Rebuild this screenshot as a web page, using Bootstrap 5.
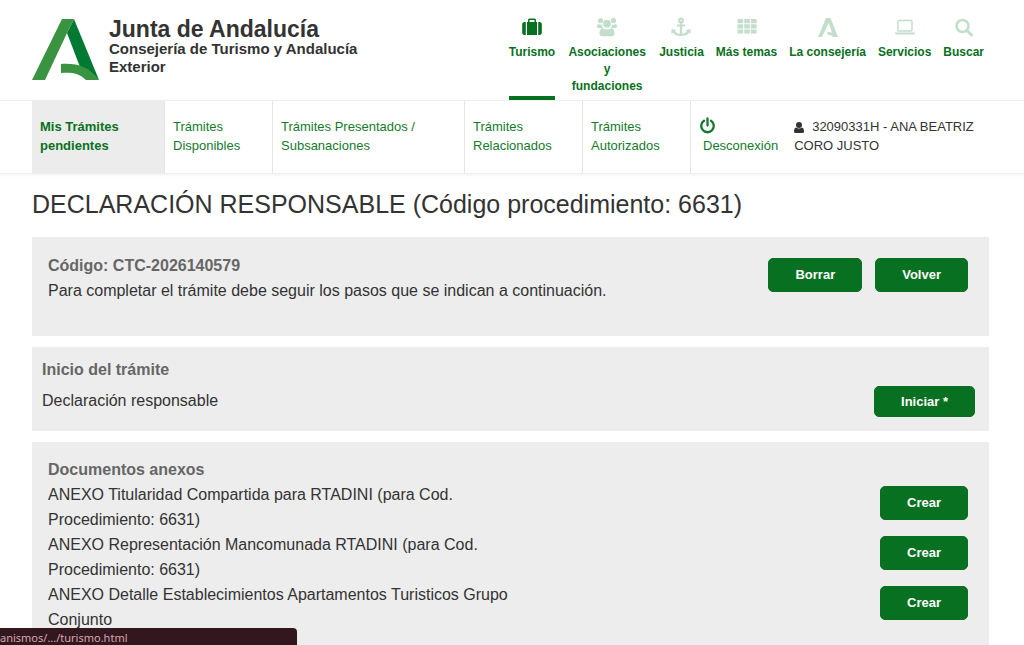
<!DOCTYPE html>
<html lang="es">
<head>
<meta charset="utf-8">
<meta name="viewport" content="width=device-width, initial-scale=1">
<title>Junta de Andalucía - Declaración responsable</title>
<link rel="stylesheet" href="https://cdn.jsdelivr.net/npm/bootstrap@5.3.0/dist/css/bootstrap.min.css">
<style>
:root { --ja-green: #087021; --ja-text: #333; }
html, body { height: 100%; }
body { font-family: "Liberation Sans", Arial, sans-serif; font-size: 16px; line-height: 25px; color: var(--ja-text); overflow: hidden; }
.page-x { padding-left: 32px; padding-right: 35px; }
.site-head { height: 100px; }
.brand { color: var(--ja-text); font-weight: bold; padding-top: 18px; }
.brand-logo { width: 68px; height: 63px; }
.brand-text { margin-left: 9px; }
.brand-name { font-size: 23px; line-height: 22px; }
.brand-dept { font-size: 15px; line-height: 18px; width: 280px; }
.main-nav { gap: 12px; padding-right: 5px; font-size: 12px; line-height: 17px; font-weight: bold; }
.main-nav a { color: var(--ja-green); text-decoration: none; padding-top: 17px; border-bottom: 4px solid transparent; height: 100px; }
.main-nav a.active { border-bottom-color: var(--ja-green); }
.main-nav svg { width: 22px; height: 20px; margin-bottom: 7px; color: #c3decb; }
.main-nav a.active svg { color: var(--ja-green); }
.groups-item { width: 80px; }
.tabs-bar { border-top: 1px solid #eee; border-bottom: 1px solid #eee; box-shadow: 0 1px 3px #0000000f; font-size: 13px; line-height: 19px; }
.tabs-bar .tab { color: #157a2c; text-decoration: none; padding: 16px 8px 18px; border-right: 1px solid #e6e6e6; flex-shrink: 0; }
.tabs-bar .tab.active { background: #ececec; font-weight: bold; color: var(--ja-green); }
.tab-s { width: 108px; } .tab-m { width: 118px; } .tab-l { width: 133px; } .tab-xl { width: 192px; }
.logout { color: #157a2c; text-decoration: none; padding: 16px 8px; }
.user-box { padding: 16px 8px; flex: 0 1 205px; }
h1 { font-size: 25px; line-height: 32px; margin: 14px 0 17px; font-weight: normal; }
.panel { background: #ededed; margin-bottom: 11px; padding: 16px 21px 16px 16px; }
.panel h2 { font-size: 16px; line-height: 25px; font-weight: bold; color: #666; margin: 0; }
.code-panel { padding-bottom: 33px; }
.code-actions { gap: 13px; padding-top: 5px; }
.start-panel { padding: 10px 14px 14px 10px; }
.start-panel h2 { margin-bottom: 6px; }
.start-text { padding-bottom: 4px; }
.btn-ja { --bs-btn-bg: #087021; --bs-btn-color: #fff; --bs-btn-border-color: #087021; --bs-btn-hover-bg: #065a1a; --bs-btn-hover-color: #fff; font-size: 13px; line-height: 20px; font-weight: bold; padding: 6px 26px; border-radius: 5px; }
.start-panel .btn-ja { padding-top: 5px; padding-bottom: 4px; }
.annexes { padding-top: 15px; }
.annex-text { width: 500px; }
.annexes .btn-ja { margin-top: 4px; }
.status-tip { left: 0; bottom: 0; width: 297px; padding-top: 3px; background: #32171f; border-radius: 0 4px 0 0; color: #d9a5b0; font-family: "Noto Sans", sans-serif; font-size: 11px; line-height: 14px; }
</style>
</head>
<body>
<header class="site-head page-x d-flex justify-content-between">
  <a href="#" class="brand d-flex text-decoration-none">
    <svg class="brand-logo flex-shrink-0" viewBox="0 0 68 63" aria-hidden="true">
      <path d="M42 1 67 62 48 49 35 15Z" fill="#007a33"/>
      <path d="M30 1H42L35 15 13 62H0Z" fill="#399341"/>
      <path d="M29 46C44 45 57 48 67 62H54C47 55 39 54 29 55Z" fill="#399341"/>
    </svg>
    <span class="brand-text">
      <span class="brand-name d-block">Junta de Andalucía</span>
      <span class="brand-dept d-block">Consejería de Turismo y Andalucía Exterior</span>
    </span>
  </a>
  <nav class="main-nav d-flex text-center">
    <a href="#" class="active d-flex flex-column align-items-center"><svg viewBox="0 0 22 20" fill="currentColor"><path d="M7 5V3q0-1.500 1.500-1.500h5q1.500 0 1.500 1.500v2h1v13H6V5h1Zm1.500 0h5V3h-5ZM4.800 5v13H3.500Q1.200 18 1.200 16V7q0-2 2.300-2Zm12.400 0v13h1.300q2.300 0 2.300-2V7q0-2-2.300-2Z"/></svg>Turismo</a>
    <a href="#" class="groups-item d-flex flex-column align-items-center"><svg viewBox="0 0 22 20" fill="currentColor"><circle cx="4.500" cy="3.500" r="2.600"/><circle cx="17.500" cy="3.500" r="2.600"/><circle cx="11" cy="6.700" r="3.900"/><path d="M2 7q2.500 1.500 4 .2Q6 10 7.300 11H2.500Q1 11 1 9.500 1 7.500 2 7Zm18 0q-2.500 1.500-4 .2.0 2.800-1.300 3.800h4.800q1.500 0 1.500-1.500 0-2-1-2.500ZM7 11.200q4 2.800 8 0 3.500 0 3.500 5 0 3-2.500 3H6q-2.500 0-2.500-3 0-5 3.500-5Z"/></svg>Asociaciones y fundaciones</a>
    <a href="#" class="d-flex flex-column align-items-center"><svg viewBox="0 0 22 20" fill="none" stroke="currentColor" stroke-width="2.200"><circle cx="11" cy="3.500" r="1.900"/><path d="M11 5.500v12M7 8.500h8M3.500 14q2 4 7.500 4t7.500-4"/><path fill="currentColor" stroke="none" d="M1.500 12v5L6.500 13Zm19 0v5l-5-4Z"/></svg>Justicia</a>
    <a href="#" class="d-flex flex-column align-items-center"><svg viewBox="0 0 22 20" fill="currentColor"><path d="M1.500 2h5.700v4.200H1.500Zm6.700 0h5.700v4.200H8.200Zm6.700 0h5.700v4.200h-5.700ZM1.500 7.200h5.700v4.200H1.500Zm6.700 0h5.700v4.200H8.200Zm6.700 0h5.700v4.200h-5.700ZM1.500 12.400h5.700v4.200H1.500Zm6.700 0h5.700v4.200H8.200Zm6.700 0h5.700v4.200h-5.700Z"/></svg>Más temas</a>
    <a href="#" class="d-flex flex-column align-items-center"><svg viewBox="0 0 22 20" fill="currentColor"><path d="M9 1h4.500L21 20h-4.500q-2.500-2.500-6-2.500V15q3-.2 4.500.7L11.700 6 5 20H1Z"/></svg>La consejería</a>
    <a href="#" class="d-flex flex-column align-items-center"><svg viewBox="0 0 22 20"><rect x="4" y="3.500" width="14" height="10.500" rx="1" fill="none" stroke="currentColor" stroke-width="1.400"/><path d="M1 15.500h20v.5q0 1.500-2 1.500H3q-2 0-2-1.500Z" fill="currentColor"/></svg>Servicios</a>
    <a href="#" class="d-flex flex-column align-items-center"><svg viewBox="0 0 22 20" fill="none" stroke="currentColor"><circle cx="9.500" cy="9" r="6" stroke-width="2.500"/><path d="m14 13.500 4.500 4.500" stroke-width="3" stroke-linecap="round"/></svg>Buscar</a>
  </nav>
</header>
<nav class="tabs-bar page-x d-flex">
  <a href="#" class="tab tab-l active">Mis Trámites pendientes</a>
  <a href="#" class="tab tab-s">Trámites Disponibles</a>
  <a href="#" class="tab tab-xl">Trámites Presentados / Subsanaciones</a>
  <a href="#" class="tab tab-m">Trámites Relacionados</a>
  <a href="#" class="tab tab-s">Trámites Autorizados</a>
  <a href="#" class="logout"><svg class="d-block" width="18" height="19" viewBox="0 0 18 19" fill="none" stroke="currentColor" stroke-width="2.300" stroke-linecap="round" aria-hidden="true"><path d="M8.500 1.500v7M5 3.700a6.300 6.300 0 1 0 7 0"/></svg><span class="ps-1">Desconexión</span></a>
  <span class="user-box"><svg class="me-2" width="10" height="11" viewBox="0 0 10 11" fill="currentColor" aria-hidden="true"><circle cx="5" cy="3" r="3"/><path d="M2 5.500q3 2 6 0Q10 6 10 9.500 10 11 8.500 11h-7Q0 11 0 9.500 0 6 2 5.500Z"/></svg>32090331H - ANA BEATRIZ CORO JUSTO</span>
</nav>
<main class="page-x">
  <h1>DECLARACIÓN RESPONSABLE (Código procedimiento: 6631)</h1>
  <section class="panel code-panel d-flex justify-content-between">
    <div>
      <h2>Código: CTC-2026140579</h2>
      <p class="mb-0">Para completar el trámite debe seguir los pasos que se indican a continuación.</p>
    </div>
    <div class="code-actions d-flex align-items-start">
      <button type="button" class="btn btn-ja">Borrar</button>
      <button type="button" class="btn btn-ja">Volver</button>
    </div>
  </section>
  <section class="panel start-panel d-flex justify-content-between">
    <div class="start-text">
      <h2>Inicio del trámite</h2>
      <p class="mb-0">Declaración responsable</p>
    </div>
    <button type="button" class="btn btn-ja align-self-end">Iniciar *</button>
  </section>
  <section class="panel annexes">
    <h2>Documentos anexos</h2>
    <div class="d-flex justify-content-between align-items-start"><span class="annex-text">ANEXO Titularidad Compartida para RTADINI (para Cod. Procedimiento: 6631)</span><button type="button" class="btn btn-ja">Crear</button></div>
    <div class="d-flex justify-content-between align-items-start"><span class="annex-text">ANEXO Representación Mancomunada RTADINI (para Cod. Procedimiento: 6631)</span><button type="button" class="btn btn-ja">Crear</button></div>
    <div class="d-flex justify-content-between align-items-start"><span class="annex-text">ANEXO Detalle Establecimientos Apartamentos Turisticos Grupo Conjunto</span><button type="button" class="btn btn-ja">Crear</button></div>
  </section>
</main>
<div class="status-tip position-fixed">anismos/.../turismo.html</div>
<script src="https://cdn.jsdelivr.net/npm/bootstrap@5.3.0/dist/js/bootstrap.bundle.min.js"></script>
</body>
</html>
